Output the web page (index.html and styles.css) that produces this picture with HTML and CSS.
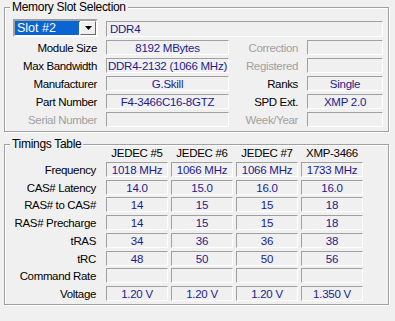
FILE: index.html
```html
<!DOCTYPE html>
<html>
<head>
    <title>CPU-Z - SPD</title>
    <link rel="stylesheet" href="styles.css">
</head>
<body>
    <fieldset class="group slot-group">
        <legend>Memory Slot Selection</legend>
        <div class="slot-grid">
            <div class="combo">
                <span class="combo-value">Slot #2</span>
                <span class="combo-btn">
                    <svg width="7" height="4" viewBox="0 0 7 4"><path d="M0 0h7L3.5 4z" fill="#000"/></svg>
                </span>
            </div>
            <div class="field field-type">DDR4</div>

            <div class="label">Module Size</div>
            <div class="field">8192 MBytes</div>
            <div class="label off">Correction</div>
            <div class="field"></div>

            <div class="label">Max Bandwidth</div>
            <div class="field">DDR4-2132 (1066 MHz)</div>
            <div class="label off">Registered</div>
            <div class="field"></div>

            <div class="label">Manufacturer</div>
            <div class="field">G.Skill</div>
            <div class="label">Ranks</div>
            <div class="field">Single</div>

            <div class="label">Part Number</div>
            <div class="field">F4-3466C16-8GTZ</div>
            <div class="label">SPD Ext.</div>
            <div class="field">XMP 2.0</div>

            <div class="label off">Serial Number</div>
            <div class="field"></div>
            <div class="label off">Week/Year</div>
            <div class="field"></div>
        </div>
    </fieldset>

    <fieldset class="group timings-group">
        <legend>Timings Table</legend>
        <div class="timing-grid">
            <div></div>
            <div class="head">JEDEC #5</div>
            <div class="head">JEDEC #6</div>
            <div class="head">JEDEC #7</div>
            <div class="head">XMP-3466</div>

            <div class="label">Frequency</div>
            <div class="field">1018 MHz</div>
            <div class="field">1066 MHz</div>
            <div class="field">1066 MHz</div>
            <div class="field">1733 MHz</div>

            <div class="label">CAS# Latency</div>
            <div class="field">14.0</div>
            <div class="field">15.0</div>
            <div class="field">16.0</div>
            <div class="field">16.0</div>

            <div class="label">RAS# to CAS#</div>
            <div class="field">14</div>
            <div class="field">15</div>
            <div class="field">15</div>
            <div class="field">18</div>

            <div class="label">RAS# Precharge</div>
            <div class="field">14</div>
            <div class="field">15</div>
            <div class="field">15</div>
            <div class="field">18</div>

            <div class="label">tRAS</div>
            <div class="field">34</div>
            <div class="field">36</div>
            <div class="field">36</div>
            <div class="field">38</div>

            <div class="label">tRC</div>
            <div class="field">48</div>
            <div class="field">50</div>
            <div class="field">50</div>
            <div class="field">56</div>

            <div class="label">Command Rate</div>
            <div class="field"></div>
            <div class="field"></div>
            <div class="field"></div>
            <div class="field"></div>

            <div class="label">Voltage</div>
            <div class="field">1.20 V</div>
            <div class="field">1.20 V</div>
            <div class="field">1.20 V</div>
            <div class="field">1.350 V</div>
        </div>
    </fieldset>
</body>
</html>
```

FILE: styles.css
```css
* {
    margin: 0;
    padding: 0;
    box-sizing: border-box;
}

body {
    background: #f0f0f0;
    font-family: 'Liberation Sans', Arial, sans-serif;
    font-size: 11.5px;
    color: #000;
    width: 395px;
    height: 321px;
    overflow: hidden;
}

.group {
    width: 385px;
    margin-left: 4px;
    border: 1px solid #a0a0a0;
    box-shadow: inset 1px 1px 0 #fff, 1px 1px 0 #fff;
    padding: 6px 5px 4px 8px;
}

.group legend {
    line-height: 13px;
    padding: 0 2px;
    margin-left: -3px;
    background: #f0f0f0;
    font-size: 12px;
    letter-spacing: -0.3px;
}

.slot-group {
    margin-top: 1px;
}

.timings-group {
    margin-top: 6px;
    padding-top: 0;
    padding-bottom: 3px;
}

.timings-group legend {
    line-height: 12px;
    margin-bottom: -3px;
}

.slot-grid {
    display: grid;
    grid-template-columns: 84px 123px 60px 76px;
    grid-template-rows: 17px repeat(5, 15px);
    column-gap: 9px;
    row-gap: 3px;
}

.timing-grid {
    display: grid;
    grid-template-columns: 90px repeat(4, 62px);
    grid-template-rows: 12px repeat(8, 15px);
    column-gap: 3px;
    row-gap: 2.75px;
}

.timing-grid .label {
    padding-right: 7px;
}

.label {
    text-align: right;
    line-height: 16px;
    white-space: nowrap;
    letter-spacing: -0.35px;
}

.label.off {
    color: #a0a0a0;
}

.head {
    text-align: center;
    line-height: 13px;
    letter-spacing: -0.3px;
}

.field {
    border: 1px solid;
    border-color: #a0a0a0 #fff #fff #a0a0a0;
    color: #1c1c8c;
    text-align: center;
    line-height: 14px;
    height: 15px;
    white-space: nowrap;
    overflow: hidden;
    letter-spacing: -0.25px;
}

.field-type {
    grid-column: 2 / 5;
    text-align: left;
    padding-left: 3px;
    height: 16px;
    margin-top: 1px;
}

.combo {
    display: flex;
    width: 85px;
    height: 18px;
    border: 2px solid;
    border-color: #a0a0a0 #fff #fff #a0a0a0;
    box-shadow: inset 1px 1px 0 #696969;
    background: #fff;
    margin-top: -1px;
}

.combo-value {
    flex: 1;
    background: #0a64d2;
    color: #fff;
    line-height: 14px;
    padding-left: 2px;
    font-size: 12.5px;
}

.combo-btn {
    width: 16px;
    display: flex;
    align-items: center;
    justify-content: center;
    background: #f0f0f0;
    border: 1px solid;
    border-color: #fff #696969 #696969 #fff;
    margin-left: 1px;
}
```
